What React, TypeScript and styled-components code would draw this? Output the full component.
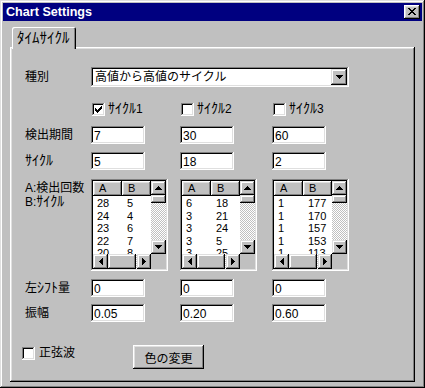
import React from 'react';
import styled, { createGlobalStyle } from 'styled-components';

const GlobalStyle = createGlobalStyle`
  html, body {
    margin: 0;
    padding: 0;
    background: #c0c0c0;
    overflow: hidden;
  }
  body {
    font-family: "Liberation Sans", "Noto Sans CJK JP", sans-serif;
    font-size: 12px;
    color: #000;
  }
`;

const raised = `box-shadow: inset -1px -1px #000, inset 1px 1px #fff, inset -2px -2px #808080, inset 2px 2px #dfdfdf;`;
const raisedSoft = `box-shadow: inset -1px -1px #000, inset 1px 1px #dfdfdf, inset -2px -2px #808080, inset 2px 2px #fff;`;
const sunken = `box-shadow: inset -1px -1px #fff, inset 1px 1px #808080, inset -2px -2px #dfdfdf, inset 2px 2px #000;`;

const Window = styled.div`
  width: 425px;
  height: 388px;
  box-sizing: border-box;
  padding: 3px;
  background: #c0c0c0;
  display: flex;
  flex-direction: column;
  ${raisedSoft}
`;

const TitleBar = styled.div`
  height: 18px;
  background: #000080;
  display: flex;
  align-items: center;
  justify-content: space-between;
  padding: 0 2px 0 3px;
`;

const Title = styled.span`
  color: #fff;
  font-family: "Liberation Sans", sans-serif;
  font-weight: bold;
  font-size: 12.6px;
  line-height: 18px;
`;

const CloseButton = styled.div`
  width: 16px;
  height: 14px;
  background: #c0c0c0;
  display: flex;
  align-items: center;
  justify-content: center;
  padding-bottom: 1px;
  box-sizing: border-box;
  ${raised}
`;

const Body = styled.div`
  flex: 1;
  display: flex;
  flex-direction: column;
  padding: 6px 7px 3px 7px;
`;

const TabStrip = styled.div`
  height: 20px;
  display: flex;
  align-items: flex-end;
  padding-left: 2px;
`;

const Tab = styled.div`
  position: relative;
  z-index: 1;
  height: 22px;
  margin-bottom: -2px;
  box-sizing: border-box;
  padding: 3px 6px 0 5px;
  background: #c0c0c0;
  font-size: 15px;
  line-height: 15px;
  box-shadow: inset 1px 1px #fff, inset -1px 0 #000, inset -2px 0 #808080;
  border-top-left-radius: 2px;
  border-top-right-radius: 2px;
`;

const Panel = styled.div`
  flex: 1;
  display: flex;
  flex-direction: column;
  padding-top: 20px;
  ${raised}
`;

const Row = styled.div<{ $top: number; $align?: string }>`
  display: grid;
  grid-template-columns: 66px 89px 92px 1fr;
  align-items: ${(p) => p.$align ?? 'center'};
  margin-top: ${(p) => p.$top}px;
  padding-left: 15px;
`;

const Label = styled.div<{ $pad?: number }>`
  font-size: 12px;
  line-height: 13px;
  padding-top: ${(p) => p.$pad ?? 0}px;
  white-space: nowrap;
`;

const Narrow = styled.span`
  font-size: 14px;
  line-height: 13px;
`;

const TextBox = styled.div`
  width: 54px;
  height: 18px;
  box-sizing: border-box;
  padding: 3px 0 0 3px;
  background: #fff;
  font-size: 12px;
  line-height: 14px;
  ${sunken}
`;

const Select = styled.div`
  grid-column: 2 / span 3;
  width: 258px;
  height: 20px;
  box-sizing: border-box;
  padding: 2px;
  background: #fff;
  display: flex;
  align-items: center;
  ${sunken}
`;

const SelectText = styled.span`
  flex: 1;
  padding-left: 2px;
  font-size: 12px;
  line-height: 16px;
`;

const DropButton = styled.div`
  width: 16px;
  height: 16px;
  background: #c0c0c0;
  display: flex;
  align-items: center;
  justify-content: center;
  ${raisedSoft}
`;

const Check = styled.div<{ $gap?: number; $shift?: number }>`
  display: flex;
  align-items: center;
  gap: ${(p) => p.$gap ?? 3}px;
  margin-left: ${(p) => p.$shift ?? 1}px;
`;

const CheckBox = styled.span`
  width: 13px;
  height: 13px;
  flex: none;
  background: #fff;
  display: flex;
  align-items: center;
  justify-content: center;
  ${sunken}
`;

const CheckLabel = styled.span`
  font-size: 12px;
  line-height: 13px;
`;

const ListBox = styled.div`
  width: 77px;
  height: 92px;
  box-sizing: border-box;
  padding: 2px;
  background: #fff;
  display: grid;
  grid-template-columns: 1fr 15px;
  grid-template-rows: 1fr 15px;
  ${sunken}
`;

const ListContent = styled.div`
  overflow: hidden;
`;

const ListRow = styled.div<{ $header?: boolean }>`
  display: grid;
  grid-template-columns: 29px 29px;
  height: ${(p) => (p.$header ? 15 : 12.5)}px;
  font-size: 11px;
  line-height: ${(p) => (p.$header ? 15 : 12.5)}px;
  margin-bottom: ${(p) => (p.$header ? 1 : 0)}px;
`;

const HeaderCell = styled.div`
  background: #c0c0c0;
  padding-left: 6px;
  ${raised}
`;

const Cell = styled.div<{ $pad: number }>`
  padding-left: ${(p) => p.$pad}px;
`;

const VScroll = styled.div`
  display: flex;
  flex-direction: column;
`;

const HScroll = styled.div`
  display: flex;
`;

const ScrollButton = styled.div<{ $w: number; $h: number }>`
  width: ${(p) => p.$w}px;
  height: ${(p) => p.$h}px;
  flex: none;
  background: #c0c0c0;
  display: flex;
  align-items: center;
  justify-content: center;
  ${raisedSoft}
`;

const Thumb = styled.div<{ $size?: number }>`
  flex: ${(p) => (p.$size ? `none` : 1)};
  ${(p) => (p.$size ? `height: ${p.$size}px;` : '')}
  background: #c0c0c0;
  ${raisedSoft}
`;

const Track = styled.div<{ $size?: number }>`
  flex: ${(p) => (p.$size ? `none` : 1)};
  ${(p) => (p.$size ? `width: ${p.$size}px;` : '')}
  background: repeating-conic-gradient(#c0c0c0 0 25%, #fff 0 50%) 0 0 / 2px 2px;
`;

const Corner = styled.div`
  background: #c0c0c0;
`;

const BottomRow = styled.div`
  display: grid;
  grid-template-columns: 111px auto;
  align-items: start;
  margin-top: 23px;
  padding-left: 12px;
`;

const SineCheck = styled(Check)`
  margin-top: 2px;
`;

const PushButton = styled.div`
  width: 71px;
  height: 24px;
  box-sizing: border-box;
  display: flex;
  align-items: center;
  justify-content: center;
  font-size: 12px;
  background: #c0c0c0;
  ${raised}
`;

function Pixels({ rows }: { rows: string[] }) {
  const w = rows[0].length;
  const h = rows.length;
  return (
    <svg width={w} height={h} viewBox={`0 0 ${w} ${h}`} shapeRendering="crispEdges">
      {rows.flatMap((r, y) =>
        r.split('').map((c, x) =>
          c === '#' ? <rect key={`${x}-${y}`} x={x} y={y} width={1} height={1} fill="#000" /> : null
        )
      )}
    </svg>
  );
}

const CLOSE = ['##....##', '.##..##.', '..####..', '...##...', '..####..', '.##..##.', '##....##'];
const CHECK = ['......#', '.....##', '#...###', '##.###.', '#####..', '.###...', '..#....'];
const DOWN = ['#######', '.#####.', '..###..', '...#...'];
const UP = ['...#...', '..###..', '.#####.', '#######'];
const LEFT = ['...#', '..##', '.###', '####', '.###', '..##', '...#'];
const RIGHT = ['#...', '##..', '###.', '####', '###.', '##..', '#...'];

function CheckItem({ checked, children }: { checked?: boolean; children: React.ReactNode }) {
  return (
    <Check>
      <CheckBox>{checked && <Pixels rows={CHECK} />}</CheckBox>
      <CheckLabel>{children}</CheckLabel>
    </Check>
  );
}

function CountList({ rows }: { rows: [number, number][] }) {
  return (
    <ListBox>
      <ListContent>
        <ListRow $header>
          <HeaderCell>A</HeaderCell>
          <HeaderCell>B</HeaderCell>
        </ListRow>
        {rows.map(([a, b], i) => (
          <ListRow key={i}>
            <Cell $pad={4}>{a}</Cell>
            <Cell $pad={5}>{b}</Cell>
          </ListRow>
        ))}
      </ListContent>
      <VScroll>
        <ScrollButton $w={15} $h={14}><Pixels rows={UP} /></ScrollButton>
        <Thumb $size={8} />
        <Track />
        <ScrollButton $w={15} $h={14}><Pixels rows={DOWN} /></ScrollButton>
      </VScroll>
      <HScroll>
        <ScrollButton $w={15} $h={15}><Pixels rows={LEFT} /></ScrollButton>
        <Thumb />
        <Track $size={1} />
        <ScrollButton $w={14} $h={15}><Pixels rows={RIGHT} /></ScrollButton>
      </HScroll>
      <Corner />
    </ListBox>
  );
}

const lists: [number, number][][] = [
  [[28, 5], [24, 4], [23, 6], [22, 7], [20, 8]],
  [[6, 18], [3, 21], [3, 24], [3, 5], [3, 25]],
  [[1, 177], [1, 170], [1, 157], [1, 153], [1, 113]],
];

export default function App() {
  return (
    <>
      <GlobalStyle />
      <Window>
        <TitleBar>
          <Title>Chart Settings</Title>
          <CloseButton><Pixels rows={CLOSE} /></CloseButton>
        </TitleBar>
        <Body>
          <TabStrip>
            <Tab>ﾀｲﾑｻｲｸﾙ</Tab>
          </TabStrip>
          <Panel>
            <Row $top={0}>
              <Label>種別</Label>
              <Select>
                <SelectText>高値から高値のサイクル</SelectText>
                <DropButton><Pixels rows={DOWN} /></DropButton>
              </Select>
            </Row>
            <Row $top={15}>
              <span />
              <CheckItem checked><Narrow>ｻｲｸﾙ</Narrow>1</CheckItem>
              <CheckItem><Narrow>ｻｲｸﾙ</Narrow>2</CheckItem>
              <CheckItem><Narrow>ｻｲｸﾙ</Narrow>3</CheckItem>
            </Row>
            <Row $top={10}>
              <Label>検出期間</Label>
              <TextBox>7</TextBox>
              <TextBox>30</TextBox>
              <TextBox>60</TextBox>
            </Row>
            <Row $top={8}>
              <Label><Narrow>ｻｲｸﾙ</Narrow></Label>
              <TextBox>5</TextBox>
              <TextBox>18</TextBox>
              <TextBox>2</TextBox>
            </Row>
            <Row $top={9} $align="start">
              <Label $pad={3}>
                A:検出回数
                <br />
                B:<Narrow>ｻｲｸﾙ</Narrow>
              </Label>
              {lists.map((l, i) => (
                <CountList key={i} rows={l} />
              ))}
            </Row>
            <Row $top={8}>
              <Label>左<Narrow>ｼﾌﾄ</Narrow>量</Label>
              <TextBox>0</TextBox>
              <TextBox>0</TextBox>
              <TextBox>0</TextBox>
            </Row>
            <Row $top={7}>
              <Label>振幅</Label>
              <TextBox>0.05</TextBox>
              <TextBox>0.20</TextBox>
              <TextBox>0.60</TextBox>
            </Row>
            <BottomRow>
              <SineCheck $gap={4} $shift={0}>
                <CheckBox />
                <CheckLabel>正弦波</CheckLabel>
              </SineCheck>
              <PushButton>色の変更</PushButton>
            </BottomRow>
          </Panel>
        </Body>
      </Window>
    </>
  );
}
